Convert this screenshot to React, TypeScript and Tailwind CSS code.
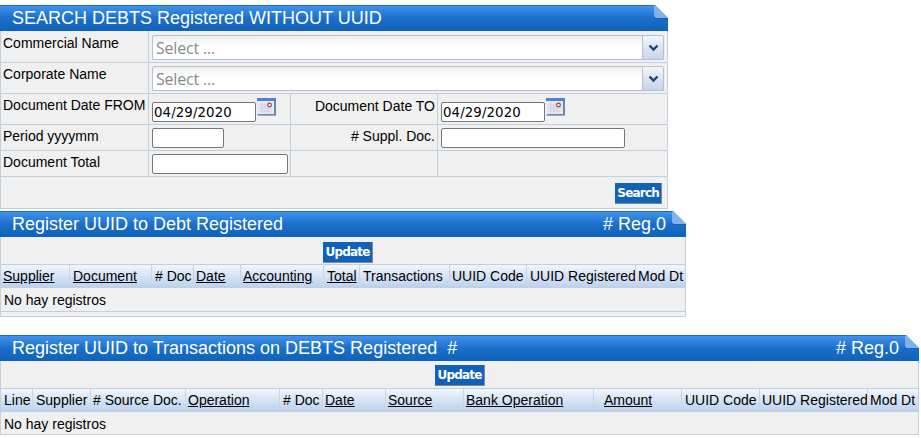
const fontSans = "font-['Liberation_Sans',Arial,sans-serif]";

function PanelHeader({ title, reg }: { title: string; reg?: string }) {
  return (
    <div className="relative flex h-[26px] items-center justify-between border-t border-[#1c6dc4] bg-gradient-to-b from-[#3f93ec] via-[#1a6fca] to-[#0f62b8] pl-3 text-[18px] text-white">
      <span className="whitespace-pre">{title}</span>
      {reg && <span className="pr-[20px]">{reg}</span>}
      {/* folded corner */}
      <svg className="absolute -top-px right-0" width="16" height="15" viewBox="0 0 16 15">
        <path d="M0 0H3L16 13V0Z" fill="#fff" />
        <path d="M3 0L16 13H4Q2 13 2 11V1Z" fill="#7fb2ea" />
        <path d="M2 11Q2 13 4 13H16V14H3Q1 14 1 11Z" fill="#0f5cae" opacity="0.6" />
      </svg>
    </div>
  );
}

function Combo() {
  return (
    <div className="flex h-[25px] w-[512px] rounded-t-[2px] border border-[#b9bfd0] bg-gradient-to-b from-[#eef0f0] via-white to-white">
      <span className="flex-1 pl-[3px] pt-[2px] text-[16px] leading-[20px] text-[#8a8a8a] font-['Open_Sans',sans-serif] tracking-[-0.2px]">Select ...</span>
      <span className="flex w-[21px] items-center justify-center border-l border-[#b9bfd0] bg-gradient-to-b from-[#f2f6fb] to-[#c4d5ea]">
        <svg width="11" height="8" viewBox="0 0 11 8">
          <path d="M1.5 1.5L5.5 5.5L9.5 1.5" fill="none" stroke="#24406f" strokeWidth="2.4" />
        </svg>
      </span>
    </div>
  );
}

function CalendarIcon() {
  return (
    <svg className="ml-[1px] mt-[-4px] shrink-0" width="19" height="18" viewBox="0 0 19 18">
      <rect x="0" y="0" width="19" height="18" fill="#c9d3e4" />
      <rect x="1" y="0" width="18" height="17.5" fill="#6f86a8" />
      <rect x="0" y="0" width="19" height="3" fill="#4f82cf" />
      <rect x="0" y="3" width="17" height="13" fill="#e7e9f1" />
      <path d="M2 7H15M2 10H15M2 13H15M5 5V15M8 5V15M11 5V15" stroke="#cfd3e0" strokeWidth="1" />
      <circle cx="12.5" cy="7" r="1.8" fill="#fff" stroke="#a23a3a" strokeWidth="1.2" />
    </svg>
  );
}

function TextBox({ width, value }: { width: string; value?: string }) {
  return (
    <div className={`h-[20px] rounded-[2px] border border-[#767676] bg-white pl-[1px] font-['DejaVu_Sans',sans-serif] text-[13.33px] leading-[19px] tracking-[0.1px] text-black ${width}`}>
      {value}
    </div>
  );
}

function ActionButton({ label }: { label: string }) {
  return (
    <span className="flex h-[21px] items-center border-b border-r border-[#7d8a99] bg-[#0f62b8] px-[2px] font-['DejaVu_Sans',sans-serif] text-[12px] font-bold tracking-[-0.8px] text-white">
      {label}
    </span>
  );
}

function SearchPanel() {
  const cell = "border-b border-r";
  return (
    <section className="w-[668px]">
      <PanelHeader title="SEARCH DEBTS Registered WITHOUT UUID" />
      <div className="border-x border-b border-[#c0d0e0] bg-[#f0f0f0] text-[14px] text-black">
        <div className="grid h-[32px] grid-cols-[148px_1fr] border-b border-[#c0d0e0]">
          <div className="border-r border-[#c0d0e0] pl-[2px] pt-[2px]">Commercial Name</div>
          <div className="pl-[3px] pt-[4px]"><Combo /></div>
        </div>
        <div className="grid h-[31px] grid-cols-[148px_1fr] border-b border-[#c0d0e0]">
          <div className="border-r border-[#c0d0e0] pl-[2px] pt-[1px]">Corporate Name</div>
          <div className="pl-[3px] pt-[3px]"><Combo /></div>
        </div>
        <div className="grid grid-cols-[148px_142px_147px_1fr] [&>div]:border-[#c0d0e0]">
          <div className={`${cell} h-[31px] pl-[2px] pt-[1px]`}>Document Date FROM</div>
          <div className={`${cell} flex items-start pl-[3px] pt-[8px]`}><TextBox width="w-[104px]" value="04/29/2020" /><CalendarIcon /></div>
          <div className={`${cell} pr-[2px] pt-[2px] text-right`}>Document Date TO</div>
          <div className="flex items-start border-b pl-[3px] pt-[8px]"><TextBox width="w-[104px]" value="04/29/2020" /><CalendarIcon /></div>

          <div className={`${cell} h-[26px] pl-[2px] pt-[1px]`}>Period yyyymm</div>
          <div className={`${cell} pl-[3px] pt-[3px]`}><TextBox width="w-[72px]" /></div>
          <div className={`${cell} pr-[2px] pt-[1px] text-right`}># Suppl. Doc.</div>
          <div className="border-b pl-[3px] pt-[3px]"><TextBox width="w-[184px]" /></div>

          <div className={`${cell} h-[26px] pl-[2px] pt-[1px]`}>Document Total</div>
          <div className={`${cell} pl-[3px] pt-[3px]`}><TextBox width="w-[136px]" /></div>
          <div className={cell} />
          <div className="border-b" />
        </div>
        <div className="flex h-[31px] items-start justify-end pr-[5px] pt-[6px]">
          <ActionButton label="Search" />
        </div>
      </div>
    </section>
  );
}

type Col = { label: string; link?: boolean; pad?: string };

function GridPanel({ title, reg, cols, template, width, toolbar, footer }: {
  title: string; reg: string; cols: Col[]; template: string; width: string; toolbar: string; footer?: boolean;
}) {
  return (
    <section className={width}>
      <PanelHeader title={title} reg={reg} />
      <div className="border-x border-b border-[#c0d0e0] bg-[#f0f0f0] text-[14px] text-black">
        <div className={`flex h-[27px] items-start justify-center ${toolbar}`}>
          <ActionButton label="Update" />
        </div>
        <div className={`grid h-[24px] border-y border-[#c0d0e0] bg-gradient-to-b from-[#f1f6fc] to-[#bcd2ec] ${template}`}>
          {cols.map((c) => (
            <div key={c.label} className={`overflow-hidden whitespace-nowrap border-r border-[#c6d6e8] leading-[22px] last:border-r-0 ${c.pad ?? "pl-[2px]"}`}>
              {c.link ? <span className="underline">{c.label}</span> : c.label}
            </div>
          ))}
        </div>
        <div className={`pl-[3px] pt-[1px] leading-[22px] ${footer ? "h-[23px]" : "h-[22px]"}`}>No hay registros</div>
        {footer && <div className="h-[5px] border-t border-[#c0d0e0]" />}
      </div>
    </section>
  );
}

const debtCols: Col[] = [
  { label: "Supplier" , link: true },
  { label: "Document", link: true, pad: "pl-[3px]" },
  { label: "# Doc", pad: "pl-[3px]" },
  { label: "Date", link: true },
  { label: "Accounting", link: true },
  { label: "Total", link: true, pad: "pl-[3px]" },
  { label: "Transactions", pad: "pl-[3px]" },
  { label: "UUID Code" },
  { label: "UUID Registered", pad: "pl-[3px]" },
  { label: "Mod Dt" },
];

const transactionCols: Col[] = [
  { label: "Line", pad: "pl-[3px]" },
  { label: "Supplier", pad: "pl-[3px]" },
  { label: "# Source Doc." },
  { label: "Operation", link: true },
  { label: "# Doc", pad: "pl-[3px]" },
  { label: "Date", link: true },
  { label: "Source", link: true },
  { label: "Bank Operation", link: true },
  { label: "Amount", link: true, pad: "pl-[10px]" },
  { label: "UUID Code", pad: "pl-[3px]" },
  { label: "UUID Registered" },
  { label: "Mod Dt" },
];

export default function App() {
  return (
    <div className={`flex h-[438px] w-[921px] flex-col overflow-hidden bg-white pt-[5px] ${fontSans}`}>
      <SearchPanel />
      <div className="mt-[2px]">
        <GridPanel
          title="Register UUID to Debt Registered"
          reg="# Reg.0"
          cols={debtCols}
          template="grid-cols-[69px_82px_42px_47px_83px_36px_90px_77px_109px_1fr]"
          width="w-[686px]"
          toolbar="pl-[10px] pt-[5px]"
          footer
        />
      </div>
      <div className="mt-[18px]">
        <GridPanel
          title="Register UUID to Transactions on DEBTS Registered  #"
          reg="# Reg.0"
          cols={transactionCols}
          template="grid-cols-[32px_58px_95px_94px_43px_63px_78px_130px_88px_78px_108px_1fr]"
          width="w-[919px]"
          toolbar="pl-[1px] pt-[4px]"
        />
      </div>
    </div>
  );
}
